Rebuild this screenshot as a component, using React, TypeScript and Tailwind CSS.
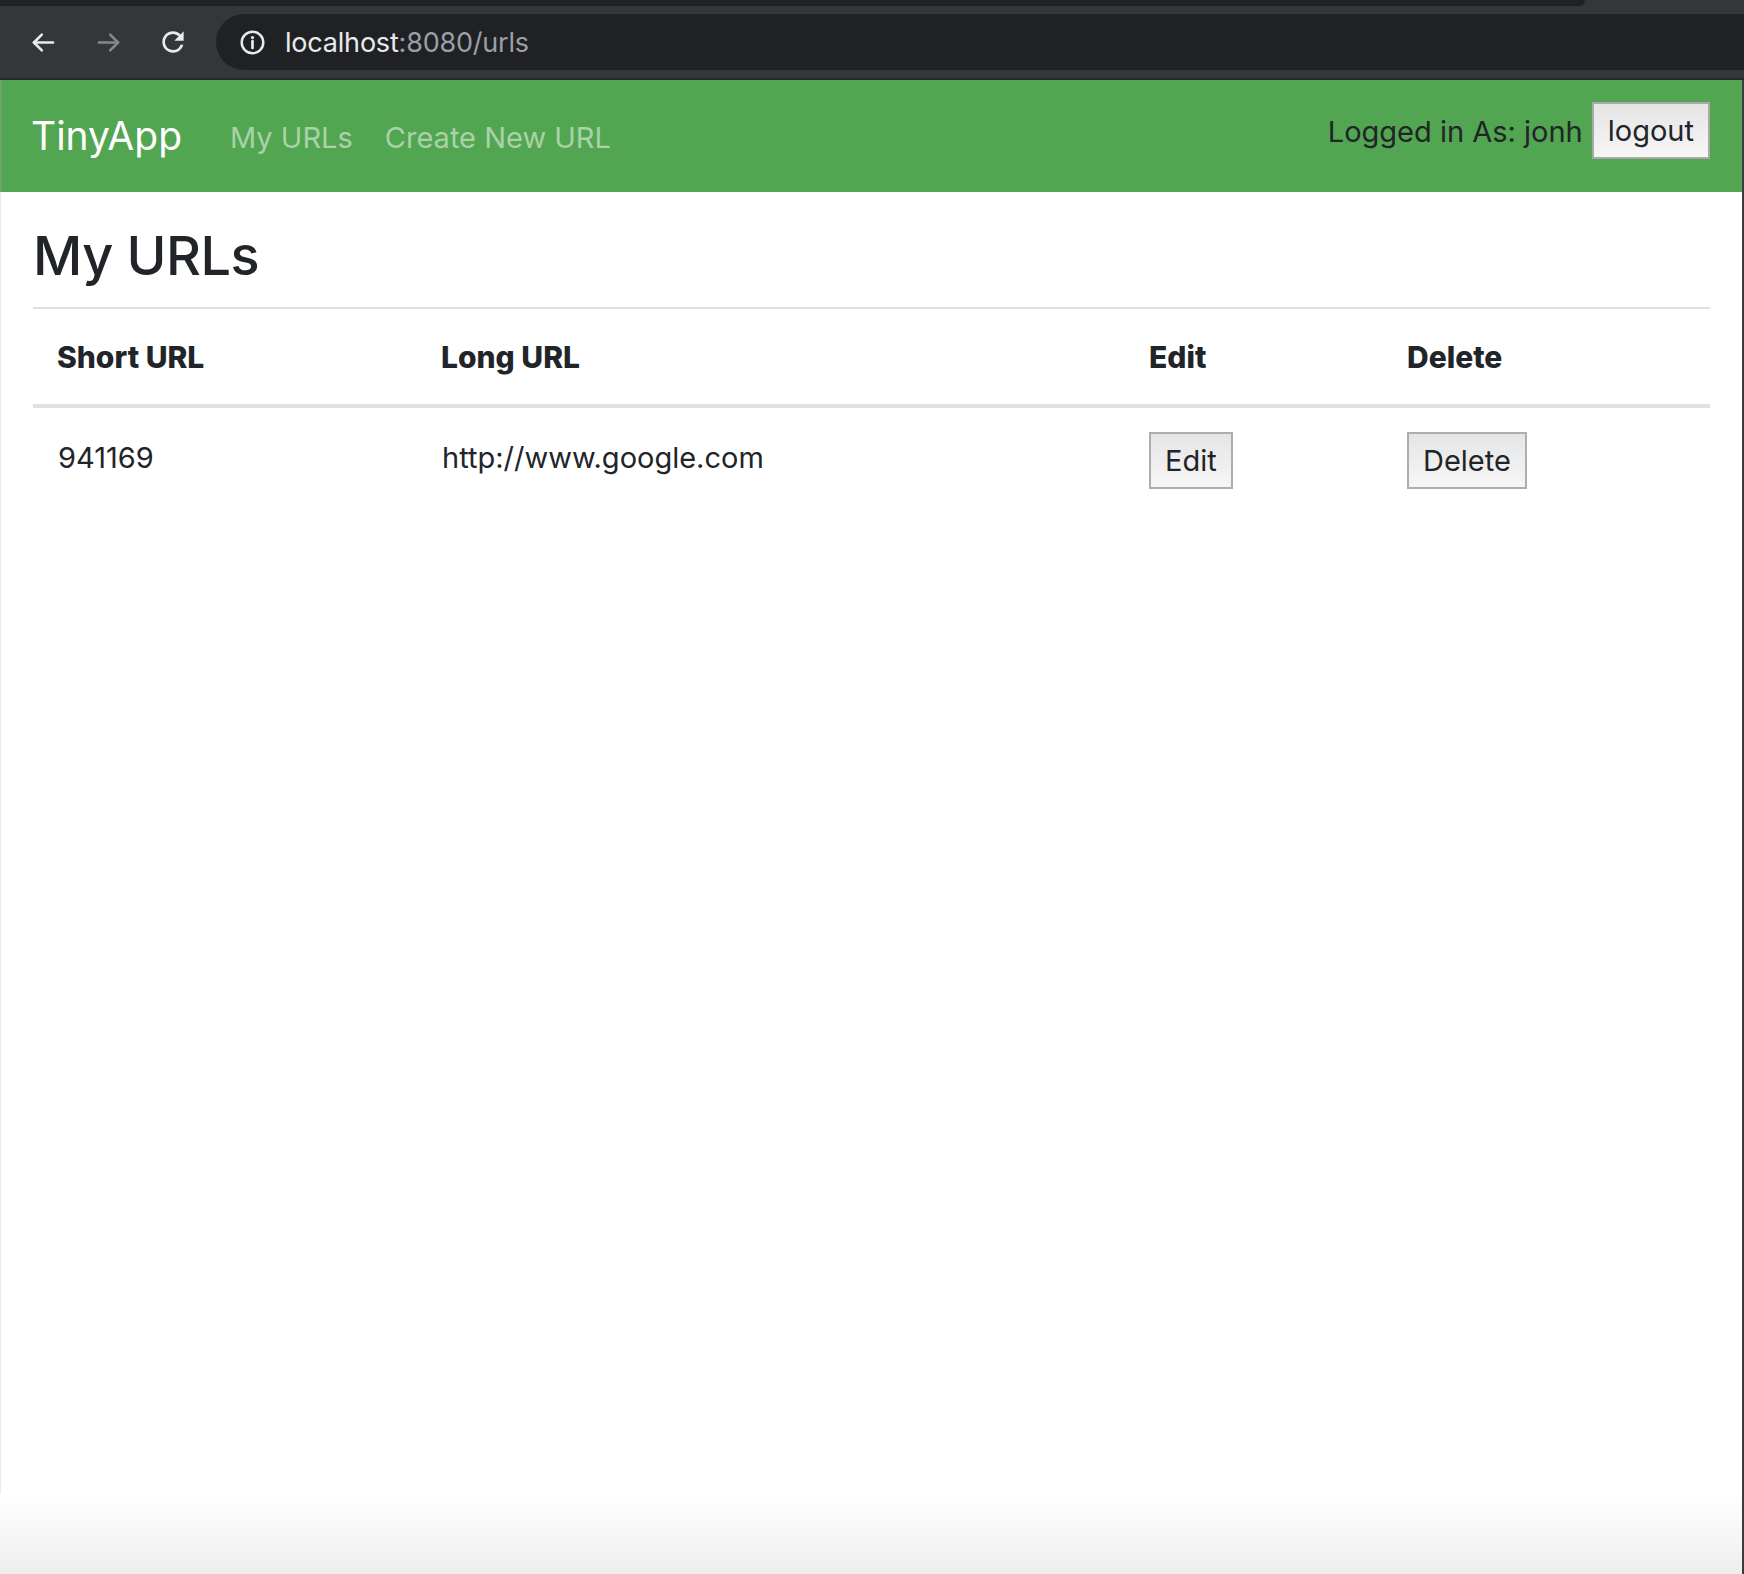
import React from "react";

const BrowserBar = () => {
  return (
    <div className="flex flex-col bg-[#35363a] h-[80px]">
      <div className="h-[6px] w-[1585px] bg-[#202124] rounded-br-[14px]" />
      <div className="flex items-center h-[72px]">
        <svg className="ml-[30px]" width="27" height="27" viewBox="0 0 24 24" fill="none" stroke="#e8eaed" strokeWidth="2.3" strokeLinecap="round" strokeLinejoin="round">
          <path d="M20.5 12H3.5" />
          <path d="M10.5 5L3.5 12l7 7" />
        </svg>
        <svg className="ml-[38px]" width="27" height="27" viewBox="0 0 24 24" fill="none" stroke="#85878b" strokeWidth="2.3" strokeLinecap="round" strokeLinejoin="round">
          <path d="M3.5 12h17" />
          <path d="M13.5 5l7 7-7 7" />
        </svg>
        <svg className="ml-[35px]" width="32" height="32" viewBox="0 0 24 24" fill="#e8eaed">
          <path d="M17.65 6.35A7.958 7.958 0 0 0 12 4c-4.42 0-7.99 3.58-7.99 8s3.57 8 7.99 8c3.73 0 6.84-2.55 7.73-6h-2.08A5.99 5.99 0 0 1 12 18c-3.31 0-6-2.69-6-6s2.69-6 6-6c1.66 0 3.14.69 4.22 1.78L13 11h7V4l-2.35 2.35z" />
        </svg>
        <div className="ml-[27px] flex-1 h-[56px] bg-[#202124] rounded-l-full flex items-center pl-[23px]">
          <svg width="27" height="27" viewBox="0 0 24 24" fill="none">
            <circle cx="12" cy="12" r="9.6" stroke="#e8eaed" strokeWidth="2.2" />
            <path d="M12 10.8v6" stroke="#e8eaed" strokeWidth="2.4" strokeLinecap="round" />
            <circle cx="12" cy="7.6" r="1.4" fill="#e8eaed" />
          </svg>
          <span className="ml-[19px] text-[27px] leading-none text-[#e8eaed] tracking-[-0.2px]">
            localhost<span className="text-[#9aa0a6]">:8080/urls</span>
          </span>
        </div>
      </div>
      <div className="h-[2px] bg-[#26272a]" />
    </div>
  );
};

const NavBar = () => {
  return (
    <nav className="h-[112px] bg-[#52a551] border-l-2 border-[#6aa869] flex justify-between items-start pl-[29px] pr-[32px]">
      <div className="flex items-start">
        <a className="mt-[36px] text-[39px] leading-none text-white">TinyApp</a>
        <a className="mt-[43px] ml-[48px] text-[29px] leading-none text-[#a9d2a8]">My URLs</a>
        <a className="mt-[43px] ml-[32px] text-[29px] leading-none text-[#a9d2a8]">Create New URL</a>
      </div>
      <div className="flex items-start">
        <span className="mt-[37px] text-[29px] leading-none text-[#212529]">Logged in As: jonh</span>
        <button className="mt-[22px] ml-[9px] h-[57px] px-[14px] border-2 border-[#a9a9a9] bg-gradient-to-b from-[#e5e5e5] to-[#f6f6f6] text-[29px] leading-none text-[#212529]">
          logout
        </button>
      </div>
    </nav>
  );
};

const urls = [{ short: "941169", long: "http://www.google.com" }];

const UrlTable = () => {
  return (
    <div className="border-t-2 border-[#dee2e6]">
      <div className="grid grid-cols-[384px_708px_258px_1fr] border-b-4 border-[#dee2e6] h-[99px] font-extrabold text-[30px] leading-[44px]">
        <div className="pl-[24px] pt-[26px]">Short URL</div>
        <div className="pl-[24px] pt-[26px]">Long URL</div>
        <div className="pl-[24px] pt-[26px]">Edit</div>
        <div className="pl-[24px] pt-[26px]">Delete</div>
      </div>
      {urls.map((url, index) => (
        <div key={index} className="grid grid-cols-[384px_708px_258px_1fr] text-[29px] leading-[44px]">
          <div className="pl-[25px] pt-[28px]">{url.short}</div>
          <div className="pl-[25px] pt-[28px]">{url.long}</div>
          <div className="pl-[24px] pt-[24px]">
            <button className="h-[57px] px-[14px] border-2 border-[#adadad] bg-gradient-to-b from-[#e5e5e5] to-[#f6f6f6] leading-none text-[#212529]">
              Edit
            </button>
          </div>
          <div className="pl-[24px] pt-[24px]">
            <button className="h-[57px] px-[14px] border-2 border-[#adadad] bg-gradient-to-b from-[#e5e5e5] to-[#f6f6f6] leading-none text-[#212529]">
              Delete
            </button>
          </div>
        </div>
      ))}
    </div>
  );
};

const App = () => {
  return (
    <div className="h-screen flex flex-col bg-white font-[Inter,'Liberation_Sans',sans-serif] text-[#212529] overflow-hidden">
      <BrowserBar />
      <div className="flex-1 flex">
        <div className="flex-1 flex flex-col">
          <NavBar />
          <main className="flex-1 px-[32px] border-l border-[#ececec]">
            <h2 className="mt-[32px] mb-[18px] text-[54px] font-medium leading-[1.2] tracking-[-0.5px]">My URLs</h2>
            <UrlTable />
          </main>
          <div className="h-[80px] bg-gradient-to-b from-white to-[#eeeeee]" />
        </div>
        <div className="w-[2px] bg-[#3c3c3e]" />
      </div>
    </div>
  );
};

export default App;
